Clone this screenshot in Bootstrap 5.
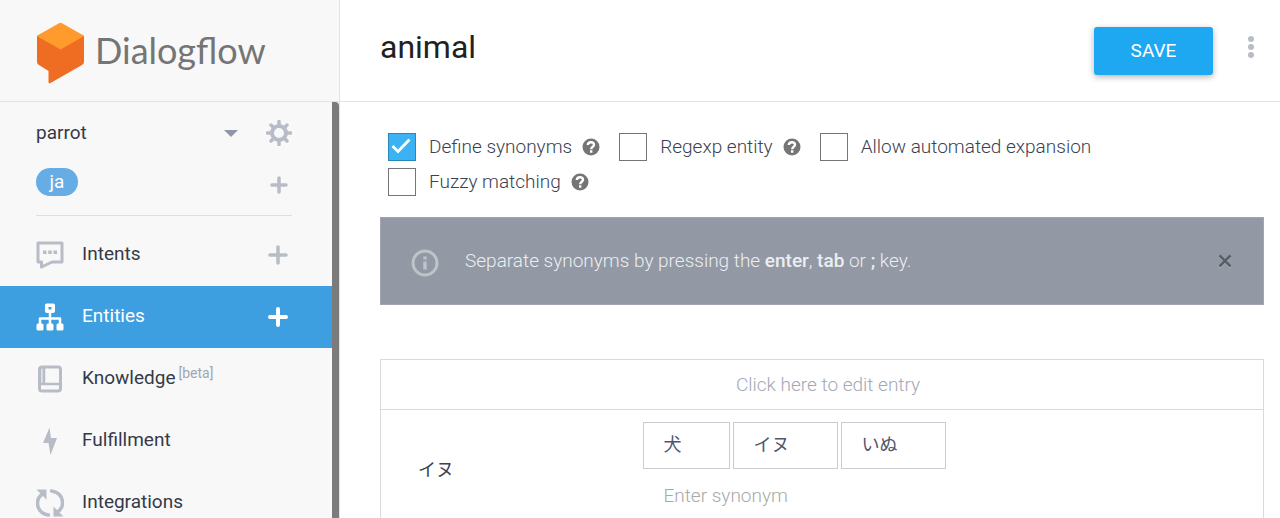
<!DOCTYPE html>
<html lang="en">
<head>
<meta charset="utf-8">
<meta name="viewport" content="width=device-width, initial-scale=1">
<title>Dialogflow - animal</title>
<link href="https://cdn.jsdelivr.net/npm/bootstrap@5.3.0/dist/css/bootstrap.min.css" rel="stylesheet">
<style>
  body { font-family: Roboto, "Noto Sans CJK JP", sans-serif; font-size: 19px; line-height: 28px; color: #3b4151; }
  .top-row { height: 102px; border-bottom: 1px solid #e3e3e3; }
  .side { width: 340px; background: #f8f8f8; border-right: 1px solid #e3e3e3; }
  .brand { padding: 4px 0 0 36px; gap: 10px; color: #757575; font-family: Lato, sans-serif; font-size: 36px; }
  .brand:hover { color: #757575; }
  .brand span { padding-bottom: 6px; }
  .side-scroll { border-right: 7px solid #7b7b7b; border-top-right-radius: 4px; }
  .agent { margin: 0 40px 0 36px; height: 114px; padding-top: 17px; border-bottom: 1px solid #dedede; }
  .agent-name { height: 28px; color: #343a48; }
  .agent-lang { margin-top: 20px; height: 32px; }
  .plain { border: 0; padding: 0; background: none; line-height: 0; color: #b7bcc7; }
  .switch { color: #9096a8; }
  .lang-pill { background: #67ade5; color: #fff; line-height: 28px; width: 42px; margin-top: 1px; text-align: center; }
  .menu { padding-top: 8px; }
  .menu-row { height: 62px; padding: 0 44px 0 36px; color: #b7bcc7; }
  .menu-row a { gap: 18px; color: inherit; text-decoration: none; }
  .menu-row a span { color: #343a48; padding-bottom: 2px; }
  .menu-row sup { font-size: 14px; color: #a0a6b4; top: -6px; margin-left: 3px; }
  .menu-row.current { background: #3d9fdf; color: #fff; }
  .menu-row.current a span { color: #fff; }
  .menu svg, .agent svg { flex: none; }
  .main-head { padding: 1px 24px 0 40px; }
  .main-head h1 { font-size: 32px; line-height: 40px; font-weight: 400; color: #212121; margin-bottom: 8px; }
  .save { width: 119px; height: 48px; font-size: 19px; color: #fff; background: #1ea8f1; border: 0; border-radius: 3px; box-shadow: 0 2px 6px rgba(0,0,0,.3); }
  .save:hover { color: #fff; background: #1798dc; }
  .actions { gap: 33px; }
  .work { padding: 31px 16px 0 40px; }
  .options { padding-left: 8px; column-gap: 19px; row-gap: 7px; font-weight: 300; }
  .option { height: 28px; }
  .option .form-check-input { width: 28px; height: 28px; margin: 0 13px 0 0; border: 1px solid #757575; border-radius: 0; background-color: #fff; }
  .option .form-check-input:checked { border-color: #2c86b8; background-color: #3bb2f3; background-size: 100%; background-image: url("data:image/svg+xml,%3csvg xmlns='http://www.w3.org/2000/svg' viewBox='0 0 26 26'%3e%3cpath fill='none' stroke='%23fff' stroke-width='2.800' d='M3.500 12L9 17.500L20.500 5.500'/%3e%3c/svg%3e"); }
  .help { margin-left: 10px; color: #757575; }
  .tip { margin-top: 21px; height: 88px; padding: 0 31px 0 30px; background: #9298a4; border: 1px solid #a0a5b0; color: #eceef1; font-weight: 300; }
  .tip b { font-weight: 500; }
  .tip p { margin: 0 0 0 26px; }
  .entries { margin-top: 54px; border: 1px solid #d9dadc; }
  .entries td { border: 0; padding: 0; vertical-align: middle; }
  .entries tr + tr td { border-top: 1px solid #d9dadc; }
  .entries td.edit-hint { height: 50px; padding-left: 12px; font-weight: 300; color: #a3a9b7; }
  .entries td.entry-name { width: 262px; padding-left: 37px; font-size: 18px; }
  .entries td.entry-values { padding: 12px 0 8px; }
  .chips { gap: 3px; font-size: 18px; }
  .chip { height: 47px; padding: 0 47px 2px 20px; border: 1px solid #c9ccd2; color: #4d576d; }
  .synonym { height: 52px; padding: 0 0 0 21px; font-size: 19px; font-weight: 300; border: 0; background: none; width: 100%; }
  .synonym::placeholder { color: #a9a9a9; opacity: 1; }
</style>
</head>
<body>
<div class="d-flex vh-100 overflow-hidden">
  <aside class="side d-flex flex-column flex-shrink-0">
    <div class="top-row flex-shrink-0 d-flex align-items-center">
      <a href="#" class="brand d-flex align-items-center text-decoration-none">
        <svg width="49" height="62" viewBox="0 0 49 62" aria-hidden="true">
          <path fill="#ef6c23" d="M1 14V40Q1 42 3 43L12.500 49V60Q12.500 62 14.500 61L46 43Q48 42 48 40V14L24.500 2Z"/>
          <path fill="#ff9a2c" d="M22.500 1.500Q24.500 0 26.500 1.500L47.500 13.500Q48 14 47.500 14.500L24.500 27.500L1.500 14.500Q1 14 1.500 13.500Z"/>
        </svg>
        <span>Dialogflow</span>
      </a>
    </div>
    <div class="side-scroll flex-grow-1 overflow-hidden">
      <div class="agent">
        <div class="agent-name d-flex align-items-center">
          <span class="flex-grow-1">parrot</span>
          <button class="plain switch" aria-label="Switch agent"><svg width="14" height="8" viewBox="0 0 14 8"><path fill="currentColor" d="M0 1H14L7 8Z"/></svg></button>
          <button class="plain ms-4 ps-1" aria-label="Settings"><svg width="26" height="26" viewBox="-13 -13 26 26"><g stroke="currentColor" fill="none" stroke-linecap="round"><circle r="7" stroke-width="4"/><path stroke-width="3.500" d="M0-8V-11.500M0 8V11.500M-8 0H-11.500M8 0H11.500M-6-6L-8-8M6-6L8-8M-6 6L-8 8M6 6L8 8"/></g></svg></button>
        </div>
        <div class="agent-lang d-flex justify-content-between">
          <span><span class="lang-pill rounded-pill d-block">ja</span></span>
          <button class="plain pe-1 pt-1" aria-label="Add language"><svg width="18" height="18" viewBox="0 0 18 18"><path stroke="currentColor" stroke-width="3.500" stroke-linecap="round" d="M9 2V16M2 9H16"/></svg></button>
        </div>
      </div>
      <nav class="menu" aria-label="Agent">
        <div class="menu-row d-flex align-items-center justify-content-between">
          <a href="#" class="d-flex align-items-center">
            <svg width="28" height="28" viewBox="0 0 28 28"><path fill="none" stroke="currentColor" stroke-width="3" stroke-linejoin="round" d="M2 2H26V21H16L5.500 26V21H2Z"/><path fill="currentColor" d="M7 9.500h3.500v3.500H7zM12.250 9.500h3.500v3.500h-3.500zM17.500 9.500H21v3.500h-3.500z"/></svg>
            <span>Intents</span></a>
          <button class="plain" aria-label="Add intent"><svg width="20" height="20" viewBox="0 0 20 20"><path stroke="currentColor" stroke-width="3.500" stroke-linecap="round" d="M10 2V18M2 10H18"/></svg></button>
        </div>
        <div class="menu-row current d-flex align-items-center justify-content-between">
          <a href="#" class="d-flex align-items-center" aria-current="page">
            <svg width="28" height="28" viewBox="0 0 28 28"><g fill="none" stroke="currentColor" stroke-linejoin="round"><path stroke-width="3.500" d="M10.750 2.250h6.500v6h-6.500z"/><path stroke-width="2.500" d="M14 10V22M4 22V15.500H24V22"/></g><g fill="currentColor"><rect x="0.500" y="20.500" width="7" height="7" rx="1.500"/><rect x="10.500" y="20.500" width="7" height="7" rx="1.500"/><rect x="20.500" y="20.500" width="7" height="7" rx="1.500"/></g></svg>
            <span>Entities</span></a>
          <button class="plain text-white" aria-label="Add entity"><svg width="20" height="20" viewBox="0 0 20 20"><path stroke="currentColor" stroke-width="4" stroke-linecap="round" d="M10 2V18M2 10H18"/></svg></button>
        </div>
        <div class="menu-row d-flex align-items-center">
          <a href="#" class="d-flex align-items-center">
            <svg width="28" height="28" viewBox="0 0 28 28"><g fill="none" stroke="currentColor"><rect x="3.500" y="2" width="21" height="24" rx="2.500" stroke-width="3"/><path stroke-width="2.500" d="M8 2V18M4 19H24"/><path stroke-width="4" opacity=".4" d="M5 2V18"/></g></svg>
            <span>Knowledge<sup>[beta]</sup></span></a>
        </div>
        <div class="menu-row d-flex align-items-center">
          <a href="#" class="d-flex align-items-center">
            <svg width="28" height="28" viewBox="0 0 28 28"><path fill="currentColor" d="M13.500 0.500L7 16H12.500L14.500 28L21 11H15Z"/></svg>
            <span>Fulfillment</span></a>
        </div>
        <div class="menu-row d-flex align-items-center">
          <a href="#" class="d-flex align-items-center">
            <svg width="28" height="28" viewBox="0 0 28 28"><path fill="none" stroke="currentColor" stroke-width="3.500" stroke-linecap="round" d="M12.500 26C0 24 -1.500 10.500 6.500 5M15.500 2C28 4 29.500 17.500 21.500 23"/><path fill="currentColor" d="M0.500 0.500H10.500V10.500ZM27.500 27.500H17.500V17.500Z"/></svg>
            <span>Integrations</span></a>
        </div>
      </nav>
    </div>
  </aside>

  <main class="flex-grow-1 bg-white">
    <header class="top-row main-head d-flex align-items-center justify-content-between">
      <h1>animal</h1>
      <div class="actions d-flex align-items-center">
        <button class="save btn">SAVE</button>
        <button class="plain pb-2" aria-label="More options"><svg width="10" height="22" viewBox="0 0 10 22"><g fill="currentColor"><circle cx="5" cy="3" r="3"/><circle cx="5" cy="11" r="3"/><circle cx="5" cy="19" r="3"/></g></svg></button>
      </div>
    </header>

    <div class="work">
      <svg class="d-none"><symbol id="question" viewBox="0 0 18 18"><circle cx="9" cy="9" r="8.500" fill="currentColor"/><path fill="none" stroke="#fff" stroke-width="2.400" d="M5.800 7C6 3.200 12 3.400 12 6.700C12 8.800 9.200 8.600 9.200 11.200M9.200 12.300V14.700"/></symbol></svg>
      <div class="options d-flex flex-wrap">
        <div class="option d-flex align-items-center">
          <input class="form-check-input" type="checkbox" id="synonyms" checked><label for="synonyms">Define synonyms</label>
          <button class="plain help" aria-label="About synonyms"><svg width="18" height="18"><use href="#question"/></svg></button>
        </div>
        <div class="option d-flex align-items-center">
          <input class="form-check-input" type="checkbox" id="regexp"><label for="regexp">Regexp entity</label>
          <button class="plain help" aria-label="About regexp entities"><svg width="18" height="18"><use href="#question"/></svg></button>
        </div>
        <div class="option d-flex align-items-center">
          <input class="form-check-input" type="checkbox" id="expansion"><label for="expansion">Allow automated expansion</label>
        </div>
        <div class="option d-flex align-items-center">
          <input class="form-check-input" type="checkbox" id="fuzzy"><label for="fuzzy">Fuzzy matching</label>
          <button class="plain help" aria-label="About fuzzy matching"><svg width="18" height="18"><use href="#question"/></svg></button>
        </div>
      </div>

      <div class="tip d-flex align-items-center" role="note">
        <svg class="mt-1 flex-shrink-0" width="28" height="28" viewBox="0 0 28 28"><circle cx="14" cy="14" r="12" fill="none" stroke="#bec2c9" stroke-width="3"/><path stroke="#bec2c9" stroke-width="3.500" d="M14 7.500V10.500M14 12.500V20.500"/></svg>
        <p class="flex-grow-1">Separate synonyms by pressing the <b>enter</b>, <b>tab</b> or <b>;</b> key.</p>
        <button class="plain" aria-label="Close"><svg width="14" height="14" viewBox="0 0 14 14"><path stroke="#c2c5cc" stroke-width="2" d="M1.500 2.500L12.500 13.500M12.500 2.500L1.500 13.500"/><path stroke="#5a5e66" stroke-width="2.500" d="M1.500 1.500L12.500 12.500M12.500 1.500L1.500 12.500"/></svg></button>
      </div>

      <table class="entries w-100">
        <tbody>
          <tr><td colspan="2" class="edit-hint text-center">Click here to edit entry</td></tr>
          <tr>
            <td class="entry-name">イヌ</td>
            <td class="entry-values">
              <div class="chips d-flex">
                <span class="chip d-flex align-items-center">犬</span>
                <span class="chip d-flex align-items-center">イヌ</span>
                <span class="chip d-flex align-items-center">いぬ</span>
              </div>
              <input class="synonym" type="text" placeholder="Enter synonym" aria-label="Enter synonym">
            </td>
          </tr>
        </tbody>
      </table>
    </div>
  </main>
</div>
<script src="https://cdn.jsdelivr.net/npm/bootstrap@5.3.0/dist/js/bootstrap.bundle.min.js"></script>
</body>
</html>
